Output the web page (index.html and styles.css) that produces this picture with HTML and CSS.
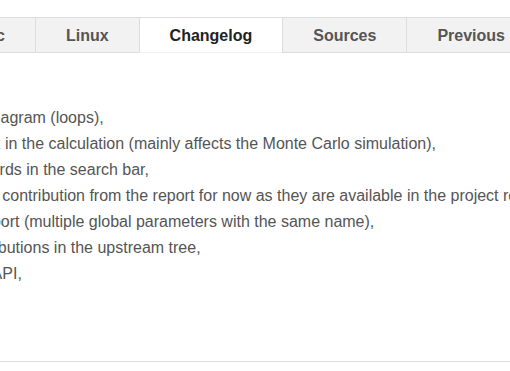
FILE: index.html
```html
<!DOCTYPE html>
<html lang="en">
<head>
<meta charset="utf-8">
<title>Changelog</title>
<link rel="stylesheet" href="styles.css">
</head>
<body>
<div class="page">
  <ul class="tabs">
    <li class="tab">Windows</li>
    <li class="tab">Mac</li>
    <li class="tab">Linux</li>
    <li class="tab active">Changelog</li>
    <li class="tab">Sources</li>
    <li class="tab">Previous</li>
  </ul>
  <div class="panel">
    <ul class="changes">
      <li>Fixed a bug in the Sankey diagram (loops),</li>
      <li>Fixed an error with the index in the calculation (mainly affects the Monte Carlo simulation),</li>
      <li>Searching for several keywords in the search bar,</li>
      <li>Removed the direct process contribution from the report for now as they are available in the project results,</li>
      <li>Fixed a bug in the HTML report (multiple global parameters with the same name),</li>
      <li>Shows all the process contributions in the upstream tree,</li>
      <li>New features in the Jython API,</li>
    </ul>
  </div>
  <div class="footer"></div>
</div>
</body>
</html>
```
FILE: styles.css
```css
html, body {
  margin: 0;
  padding: 0;
  overflow: hidden;
  background: #fff;
}

body {
  font-family: "Liberation Sans", Arial, sans-serif;
  font-size: 16px;
  color: #555;
}

.page {
  padding-top: 17px;
}

.tabs {
  display: flex;
  list-style: none;
  margin: 0 0 0 -188.3px;
  padding: 0;
  white-space: nowrap;
}

.tab {
  flex: none;
  padding: 9px 30px 7px;
  line-height: 18px;
  font-weight: bold;
  color: #555;
  background: #f2f2f2;
  border: 1px solid #ddd;
  border-right: none;
}

.tab:last-child {
  border-right: 1px solid #ddd;
}

.tab.active {
  background: #fff;
  color: #222;
  border-bottom-color: #f1f1f1;
}

.changes {
  margin: 52px 0 0 -201.4px;
  padding: 0;
  list-style: none;
  line-height: 26px;
  white-space: nowrap;
}

.footer {
  margin-top: 74px;
  border-top: 1px solid #ddd;
}
```
